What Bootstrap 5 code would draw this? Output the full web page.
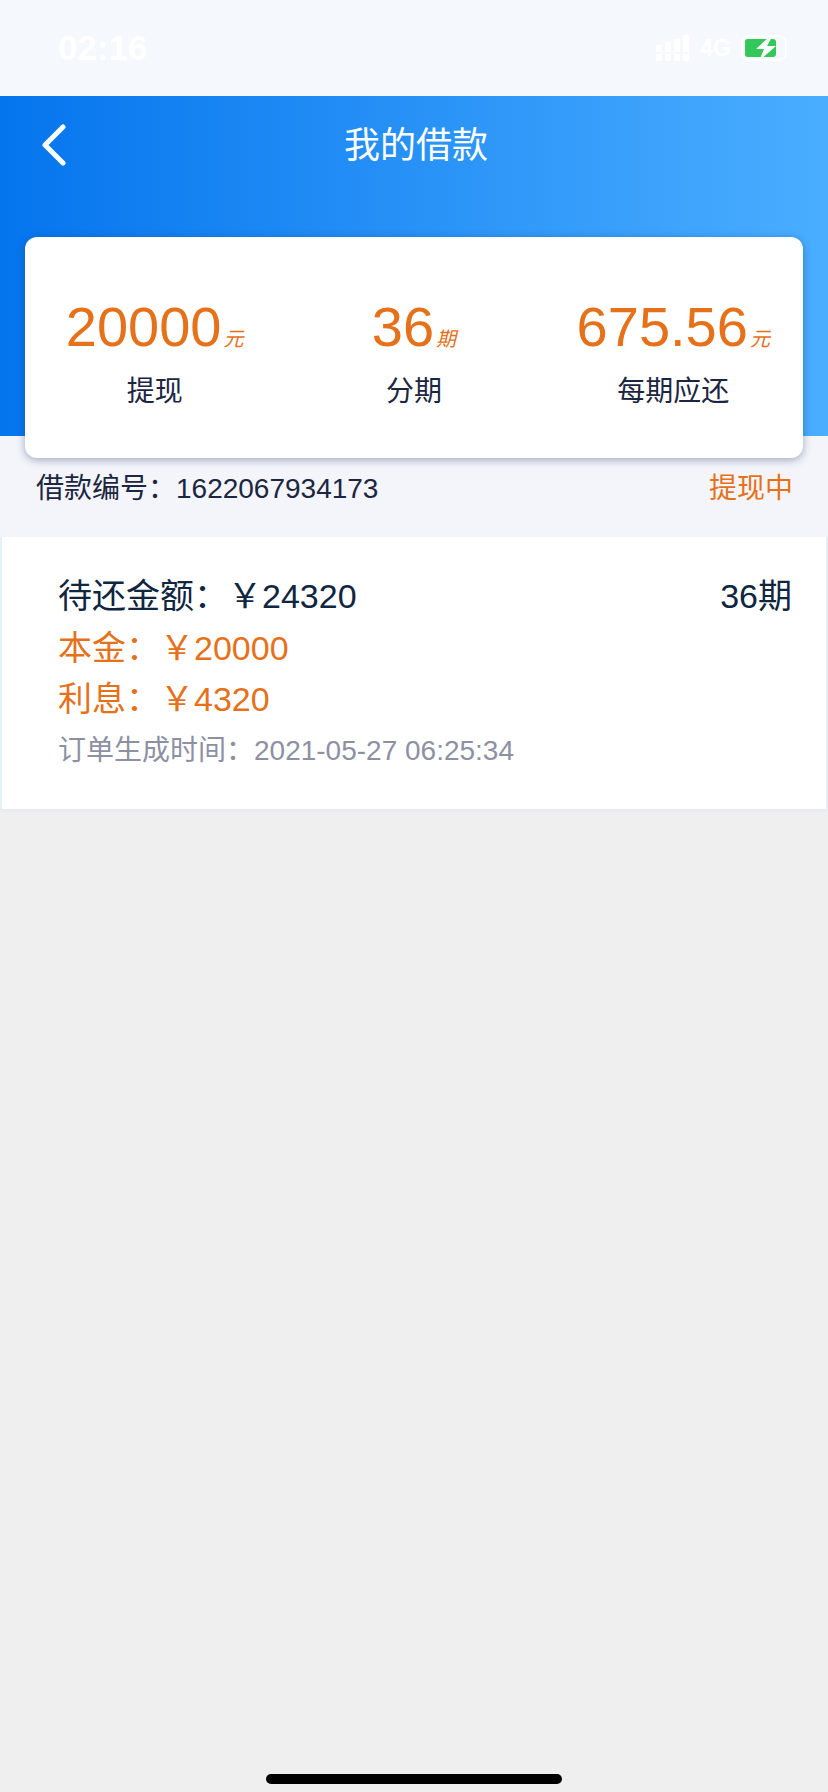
<!DOCTYPE html>
<html lang="zh-CN">
<head>
  <meta charset="UTF-8" />
  <title>我的借款</title>
  <meta name="viewport" content="width=device-width, initial-scale=1" />
  <link href="https://cdn.jsdelivr.net/npm/bootstrap@5.3.3/dist/css/bootstrap.min.css" rel="stylesheet" />
  <style>
    body { background: #efeff0; width: 828px; height: 1792px; overflow: hidden; position: relative; font-family: "Liberation Sans", "Noto Sans CJK SC", sans-serif; color: #1c2640; }
    .status-strip { height: 96px; background: #f5f8fd; color: #fff; padding: 0 39px 0 58px; }
    .status-time { font-size: 35px; font-weight: 700; }
    .status-net { font-size: 23px; font-weight: 700; margin: 0 2px; }
    .hero { height: 340px; background: linear-gradient(90deg, #0575ee, #4aaeff); color: #fff; padding: 0 0 0 41px; }
    .hero-bar { height: 98px; position: relative; }
    .hero-title { font-size: 36px; line-height: 100px; text-align: center; margin-left: -39px; width: 828px; }
    .back-icon { position: absolute; left: 0; top: 28px; }
    .sum-panel { width: 778px; height: 221px; margin: 43px 0 0 -16px; background: #fff; border-radius: 12px; box-shadow: 0 2px 8px rgba(30, 50, 90, .4); position: relative; padding-top: 58px; color: #1c2640; }
    .sum-col { width: 33.33%; text-align: center; }
    .sum-num { font-size: 56px; line-height: 64px; color: #e5711a; }
    .sum-unit { font-size: 20px; font-style: italic; color: #e5711a; margin-left: 2px; }
    .sum-label { font-size: 28px; line-height: 40px; margin-top: 13px; }
    .no-row { height: 101px; background: #f3f5fa; padding: 33px 36px 0 36px; font-size: 28px; line-height: 40px; }
    .no-row .state { color: #e5711a; margin-right: -1px; }
    .loan-box { height: 272px; background: #fff; border-left: 2px solid #e6f0fb; border-right: 2px solid #e6f0fb; box-shadow: 0 2px 4px #e3e9f2; padding: 33px 34px 0 56px; font-size: 34px; }
    .loan-main { line-height: 53px; color: #0f2540; }
    .loan-sub { line-height: 51px; color: #e5711a; }
    .loan-time { font-size: 28px; line-height: 44px; color: #8d90a2; margin-top: 4px; }
    .home-bar { position: absolute; left: 266px; bottom: 8px; width: 296px; height: 10px; border-radius: 5px; background: #000; }
  </style>
</head>
<body>
  <!-- Status bar -->
  <div class="status-strip d-flex align-items-center justify-content-between">
    <span class="status-time">02:16</span>
    <div class="d-flex align-items-center gap-2">
      <svg width="34" height="26" viewBox="0 0 34 26" fill="#fff">
        <rect x="0" y="10" width="6" height="7"/><rect x="9" y="7" width="6" height="10"/><rect x="18" y="4" width="6" height="13"/><rect x="27" y="0" width="6" height="17"/>
        <rect x="0" y="19" width="6" height="7"/><rect x="9" y="19" width="6" height="7"/><rect x="18" y="19" width="6" height="7"/><rect x="27" y="19" width="6" height="7"/>
      </svg>
      <span class="status-net">4G</span>
      <svg width="48" height="26" viewBox="0 0 48 26">
        <rect x="1" y="1" width="44" height="24" rx="7" fill="none" stroke="#fff" stroke-width="1.5"/>
        <rect x="4" y="4" width="31" height="18" rx="3" fill="#34c759"/>
        <path d="M30 0L15 14h8l-5 12 17-15h-9l5-9z" fill="#fff"/>
      </svg>
    </div>
  </div>

  <!-- Blue header -->
  <div class="hero">
    <div class="hero-bar">
      <svg class="back-icon" width="26" height="42" viewBox="0 0 26 42" fill="none" stroke="#fff" stroke-width="5" stroke-linecap="round" stroke-linejoin="round">
        <path d="M22 3L4 21l18 18"/>
      </svg>
      <div class="hero-title">我的借款</div>
    </div>

    <!-- Summary card -->
    <div class="sum-panel d-flex">
      <div class="sum-col">
        <div><span class="sum-num">20000</span><span class="sum-unit">元</span></div>
        <div class="sum-label">提现</div>
      </div>
      <div class="sum-col">
        <div><span class="sum-num">36</span><span class="sum-unit">期</span></div>
        <div class="sum-label">分期</div>
      </div>
      <div class="sum-col">
        <div><span class="sum-num">675.56</span><span class="sum-unit">元</span></div>
        <div class="sum-label">每期应还</div>
      </div>
    </div>
  </div>

  <div class="no-row d-flex justify-content-between">
    <span>借款编号：1622067934173</span>
    <span class="state">提现中</span>
  </div>

  <!-- Loan detail -->
  <div class="loan-box">
    <div class="loan-main d-flex justify-content-between">
      <span>待还金额：￥24320</span>
      <span>36期</span>
    </div>
    <div class="loan-sub">本金：￥20000</div>
    <div class="loan-sub">利息：￥4320</div>
    <div class="loan-time">订单生成时间：2021-05-27 06:25:34</div>
  </div>

  <div class="home-bar"></div>
  <script src="https://cdn.jsdelivr.net/npm/bootstrap@5.3.3/dist/js/bootstrap.bundle.min.js"></script>
</body>
</html>
